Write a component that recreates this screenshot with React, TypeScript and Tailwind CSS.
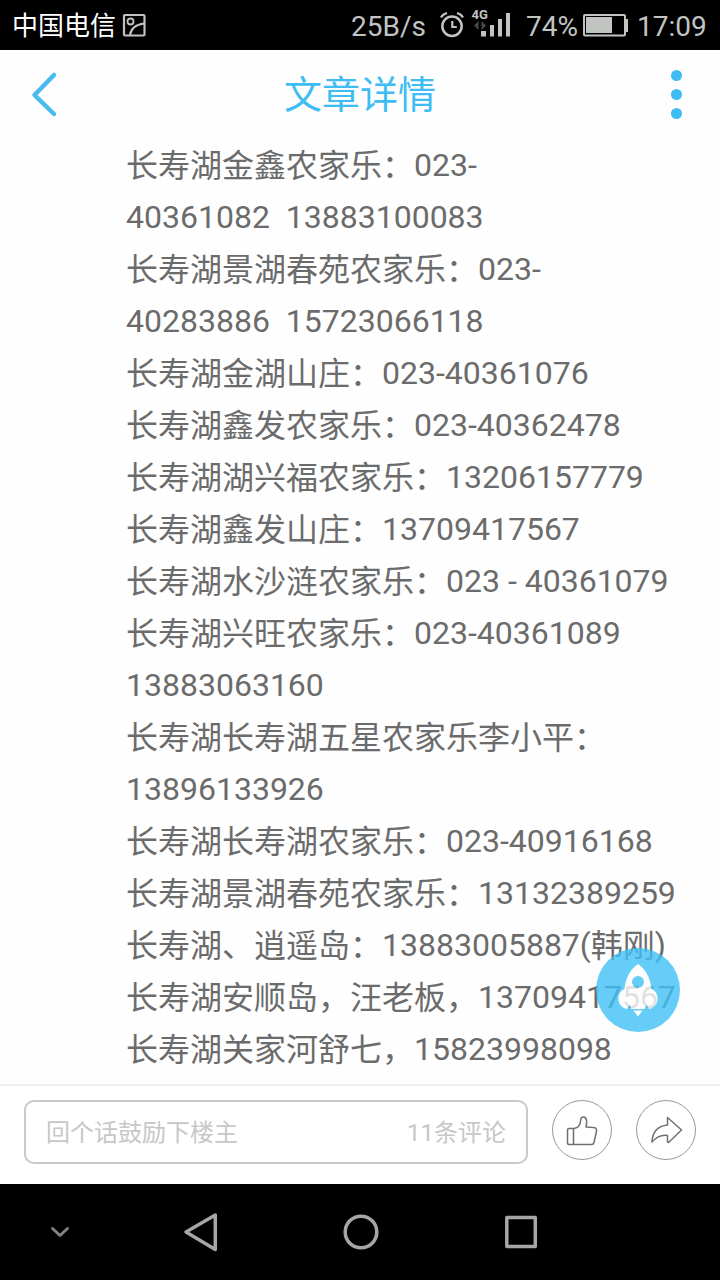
const lines: string[] = [
  '长寿湖金鑫农家乐：023-',
  '40361082  13883100083',
  '长寿湖景湖春苑农家乐：023-',
  '40283886  15723066118',
  '长寿湖金湖山庄：023-40361076',
  '长寿湖鑫发农家乐：023-40362478',
  '长寿湖湖兴福农家乐：13206157779',
  '长寿湖鑫发山庄：13709417567',
  '长寿湖水沙涟农家乐：023 - 40361079',
  '长寿湖兴旺农家乐：023-40361089',
  '13883063160',
  '长寿湖长寿湖五星农家乐李小平：',
  '13896133926',
  '长寿湖长寿湖农家乐：023-40916168',
  '长寿湖景湖春苑农家乐：13132389259',
  '长寿湖、逍遥岛：13883005887(韩刚)',
  '长寿湖安顺岛，汪老板，13709417567',
  '长寿湖关家河舒七，15823998098',
];

function StatusBar() {
  return (
    <div className="flex h-[50px] shrink-0 items-center bg-black text-[28px] leading-[50px] text-[#c2c4c2]">
      <span className="ml-3 w-[110px] whitespace-nowrap pt-px text-[26px] leading-[48px] text-white">中国电信</span>
      <svg className="h-[50px] w-6 shrink-0" viewBox="122 0 24 50" fill="none" stroke="#c2c2c2" strokeWidth="2.2">
        <rect x="124" y="15" width="20.5" height="20.5" rx="1" />
        <circle cx="130.5" cy="21.5" r="3" strokeWidth="1.8" />
        <path d="M130 35c1-6 6-10.500 14-11.500" />
      </svg>
      <span className="ml-auto w-[87px] shrink-0 whitespace-nowrap pt-[3px] leading-[47px]">25B/s</span>
      <svg className="h-[50px] w-[88px] shrink-0" viewBox="438 0 88 50" fill="none" stroke="#c2c4c2">
        <circle cx="452" cy="26.300" r="9.700" strokeWidth="2.500" />
        <path d="M452.300 21v6h4.500" strokeWidth="2.200" />
        <path d="M441 17.500q2-3.500 6-4.500M463 17.500q-2-3.500-6-4.500" strokeWidth="2.300" />
        <text x="471.500" y="19" fill="#c2c4c2" stroke="none" className="text-[13px] font-bold">4G</text>
        <path d="M478.500 21v9l-4.500-4.500zM481.500 21v9l4.500-4.500z" fill="#4a4a4a" stroke="none" />
        <path d="M481 31h5v5.500h-5zM490 25h4v11.500h-4zM498 19h4v17.500h-4zM506 13h4v23.500h-4z" fill="#c2c4c2" stroke="none" />
      </svg>
      <span className="w-[57px] shrink-0 whitespace-nowrap pt-[3px] leading-[47px]">74%</span>
      <svg className="h-[50px] w-[54px] shrink-0" viewBox="583 0 54 50" fill="#c2c4c2">
        <rect x="584" y="15" width="41" height="20.500" rx="1" fill="none" stroke="#c2c4c2" strokeWidth="2" />
        <path d="M586 17h26v16h-26zM626 19h2v13h-2z" />
      </svg>
      <span className="w-[83px] shrink-0 whitespace-nowrap pt-[3px] leading-[47px]">17:09</span>
    </div>
  );
}

function Header() {
  return (
    <header className="flex h-[89px] shrink-0 items-center justify-between text-[#3dbdf3]">
      <svg className="h-[89px] w-20" viewBox="0 50 80 89" fill="none" stroke="#48bcee" strokeWidth="4.500" strokeLinecap="round" strokeLinejoin="round">
        <path d="M54 75 34.500 95 54 114" />
      </svg>
      <h1 className="pt-[2px] text-[38px] leading-[87px]">文章详情</h1>
      <div className="flex w-20 flex-col items-center gap-2">
        <i className="ml-[-7px] size-[11px] rounded-full bg-[#3dbdf3]" />
        <i className="ml-[-7px] size-[11px] rounded-full bg-[#3dbdf3]" />
        <i className="ml-[-7px] size-[11px] rounded-full bg-[#3dbdf3]" />
      </div>
    </header>
  );
}

function Line({ text }: { text: string }) {
  return (
    <p className="h-[52px] whitespace-pre">
      {text.split(/([\u3000-\uffef]+)/).map((part, i) =>
        i % 2 ? <span key={i} className="align-[-1px] leading-none">{part}</span> : part,
      )}
    </p>
  );
}

function RocketButton() {
  return (
    <button className="absolute top-[809px] left-[596px] size-[84px] opacity-80" aria-label="Top">
      <svg className="size-full" viewBox="0 0 84 84">
        <circle cx="42" cy="42" r="42" fill="#40c1f6" />
        <path fill="#fff" fillRule="evenodd" d="M42 16c7 5 12.500 13 13.500 25 4.500 2 6.500 6 6 10.500-.4 5-3.500 8.500-8.500 9.500l-2.500-4-2 4H35.500L33.500 57l-2.500 4c-5-1-8-4.500-8.500-9.500-.4-4.500 1.500-8.500 6-10.500C29.500 29 35 21 42 16zM42 28a6 6 0 1 0 0 12 6 6 0 0 0 0-12z" />
        <path fill="#fff" d="M37.500 62.500h9L42 68.500z" />
      </svg>
    </button>
  );
}

function CommentBar() {
  return (
    <footer className="flex h-[100px] shrink-0 items-start border-t-2 border-[#eee] bg-white pt-3.5 pl-6">
      <div className="flex h-16 w-[504px] items-center justify-between rounded-[10px] border-2 border-[#c9c9c9] px-5 text-2xl text-[#c7c7c7]">
        <span className="pt-0.5">回个话鼓励下楼主</span>
        <span className="pt-px">11条评论</span>
      </div>
      <button className="ml-6 size-[60px]" aria-label="Like">
        <svg viewBox="0 0 60 60" fill="none" stroke="#707070" strokeWidth="1.500" strokeLinejoin="round">
          <circle cx="30" cy="30" r="29.500" stroke="#999" strokeWidth="1" />
          <path d="M22 28.500h-5q-1.500 0-1.500 1.500v13q0 1.500 1.500 1.500h22.500q2 0 2.500-2l2.500-11.500q.5-3.500-3-3.500l-7.500-.5q1-3.500.5-6.500c-.5-4.500-5.500-4.500-5.800-.5-.3 5-2.200 8-6.700 8.500zM21.500 28.500v16" />
        </svg>
      </button>
      <button className="ml-6 size-[60px]" aria-label="Share">
        <svg viewBox="0 0 60 60" fill="none" stroke="#707070" strokeWidth="1.500" strokeLinejoin="round">
          <circle cx="30" cy="30" r="29.500" stroke="#999" strokeWidth="1" />
          <path d="M31.500 17.500 45.500 30 32.500 42.500 31.500 42v-6.500c-6-1-11 1.500-15.500 6.500C16.500 32 22 26 31.500 25z" />
        </svg>
      </button>
    </footer>
  );
}

function NavBar() {
  return (
    <nav className="h-24 shrink-0 bg-black">
      <svg className="h-24 w-full" viewBox="0 1184 720 96" fill="none" stroke="#a6a6a6" strokeWidth="3.500" strokeLinejoin="round" strokeLinecap="round">
        <path d="m52.500 1228.500 7.500 7 7.500-7" stroke="#858585" strokeWidth="2.800" />
        <path d="M215.300 1215v34.500L186 1232z" />
        <circle cx="361" cy="1232" r="15.800" />
        <rect x="506.800" y="1217.500" width="28.500" height="29" />
      </svg>
    </nav>
  );
}

export default function App() {
  return (
    <div className="flex h-[1280px] w-[720px] flex-col overflow-hidden bg-[#fefefe] font-['Roboto','Noto_Sans_CJK_SC',sans-serif]">
      <StatusBar />
      <Header />
      <main className="relative h-[945px] shrink-0 pl-[126px] text-[32px] leading-[52px] text-[#6b6b6b]">
        {lines.map((line) => (
          <Line key={line} text={line} />
        ))}
        <RocketButton />
      </main>
      <CommentBar />
      <NavBar />
    </div>
  );
}
